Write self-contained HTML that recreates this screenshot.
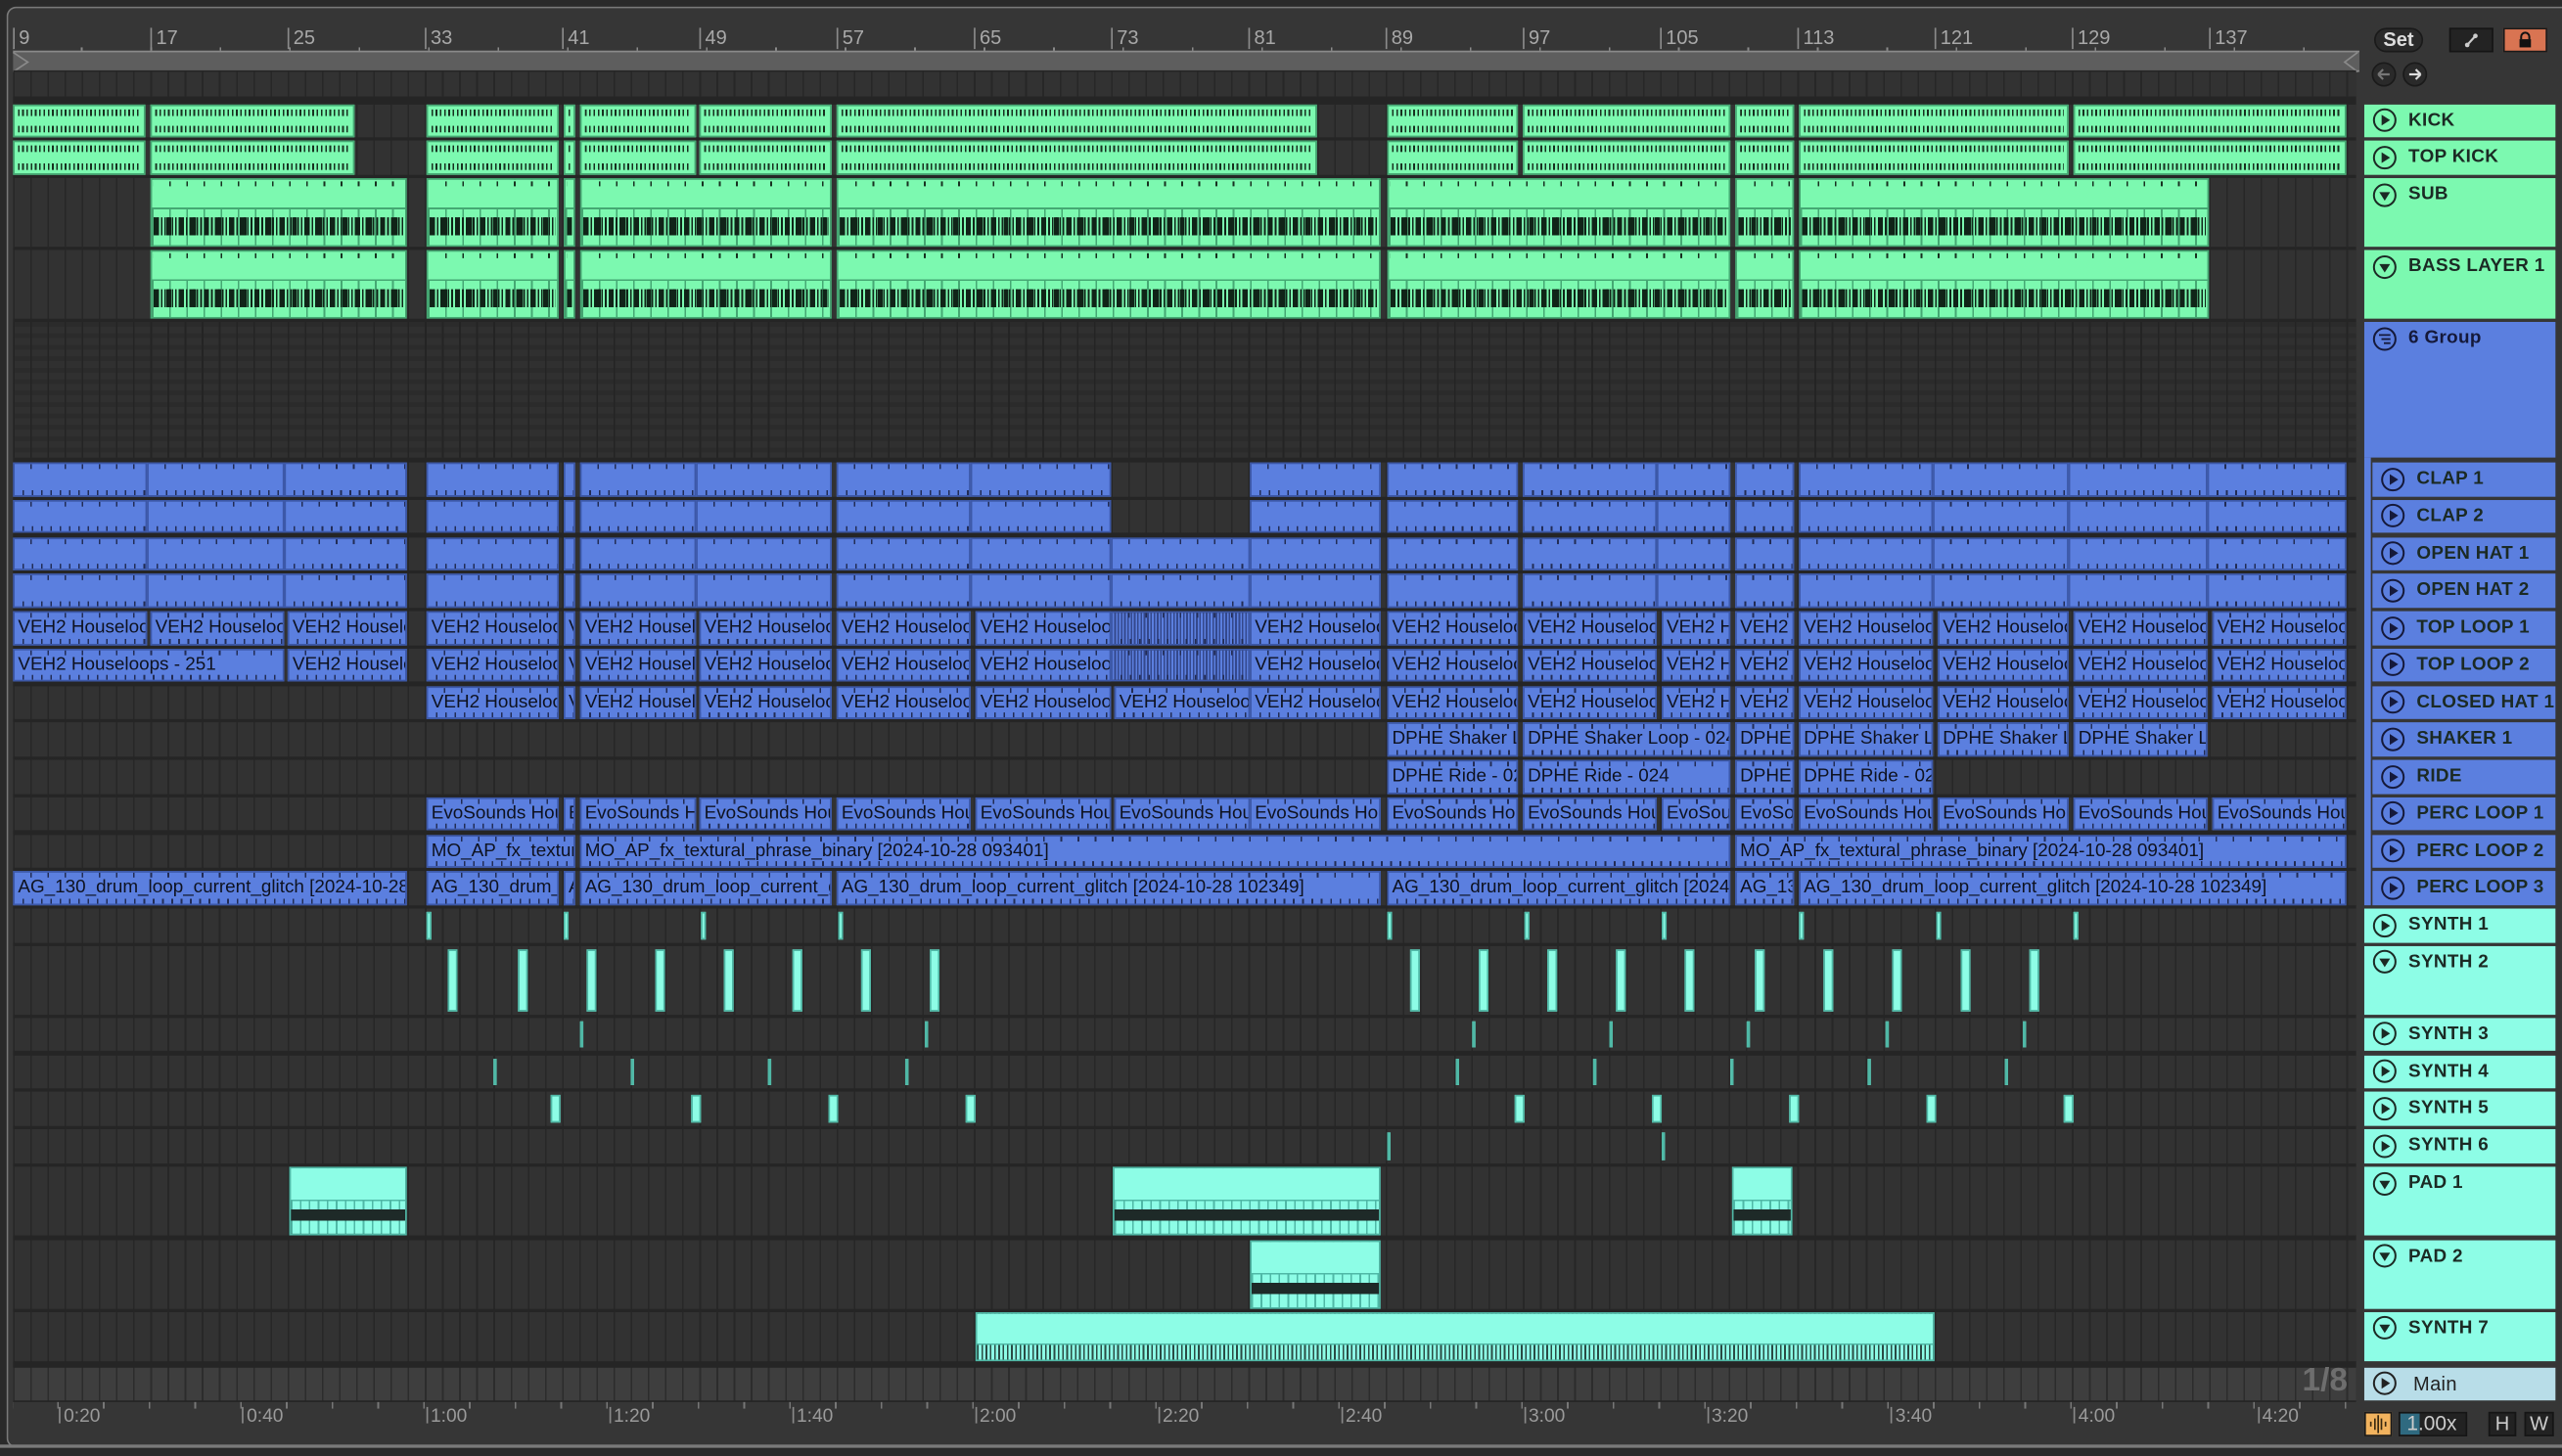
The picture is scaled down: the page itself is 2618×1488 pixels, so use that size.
<!DOCTYPE html>
<html><head><meta charset="utf-8"><style>
html,body{margin:0;padding:0;background:#2a2a2a;overflow:hidden}
body{width:2618px;height:1488px;position:relative}
#c{position:absolute;left:0;top:0;width:1568px;height:891px;transform-origin:0 0;transform:scale(1.66964,1.67003);font-family:"Liberation Sans",sans-serif}
.a{position:absolute}
#panel{left:4px;top:4px;width:1570px;height:880px;border:1.5px solid #7a7a7a;border-right:none;border-radius:6px 0 0 6px;background:#363636}
.row{position:absolute;left:7.5px;width:1434px;background:repeating-linear-gradient(90deg,#272727 0 1px,#323232 1px 10.5px)}
.g,.b,.cy{position:absolute;top:0;height:100%;box-sizing:border-box}
.g{background:#7cf9b0;border:1px solid #45a873}
.g.k:before,.g.k:after{content:"";position:absolute;left:2px;right:2px;height:4px;background:repeating-linear-gradient(90deg,#17301f 0 1px,transparent 1px 2.6px)}
.g.k:before{top:2px}.g.k:after{bottom:2px}
.g.s{background:linear-gradient(#7cf9b0 0 17px,#45a873 17px 18px,transparent 18px),repeating-linear-gradient(90deg,#45a873 0 1px,#7cf9b0 1px 10.5px)}
.g.s:before{content:"";position:absolute;left:1px;right:1px;top:1px;height:3px;background:repeating-linear-gradient(90deg,transparent 0 9.5px,#17301f 9.5px 10.5px)}
.g.s:after{content:"";position:absolute;left:1px;right:1px;top:23px;height:11px;background:repeating-linear-gradient(90deg,#102418 0 1px,transparent 1px 2.2px),repeating-linear-gradient(90deg,#102418 0 3px,transparent 3px 7.7px)}
.b{background:#5b7fdf;border:1px solid #3c58a8;font-size:11.3px;line-height:18.5px;color:#0e1220;padding-left:2px;white-space:nowrap;overflow:hidden}
.b:before{content:"";position:absolute;left:0;right:0;top:0;height:3px;background:repeating-linear-gradient(90deg,transparent 0 9.5px,#222c55 9.5px 10.5px)}
.b:after{content:"";position:absolute;left:0;right:0;bottom:0;height:3px;background:repeating-linear-gradient(90deg,transparent 0 4.7px,#222c55 4.7px 5.7px)}
.b.w{background:repeating-linear-gradient(90deg,#5b7fdf 0 1px,#34488c 1px 2px)}
.cy{background:#8dfde6;border:1px solid #4fb8a6}
.cy.p{background:linear-gradient(#8dfde6 0 19px,#4fb8a6 19px 20px,transparent 20px 25px,#1e2a28 25px 32px,transparent 32px),repeating-linear-gradient(90deg,#4fb8a6 0 1px,#8dfde6 1px 5.5px)}
.cy.q{background:linear-gradient(#8dfde6 0 18px,#4fb8a6 18px 19px,transparent 19px),repeating-linear-gradient(90deg,#2a4a44 0 1px,#8dfde6 1px 2.6px)}
.sl{position:absolute;top:2px;bottom:2px;background:#8dfde6;border:1px solid #4fb8a6;box-sizing:border-box}
.h{position:absolute;left:1447px;width:117px;box-sizing:border-box;font-weight:bold;font-size:11.3px;color:#1b2a24;letter-spacing:.2px}
.h svg{position:absolute;left:5px;top:2.5px}
.h span{position:absolute;left:27px;top:4px;white-space:nowrap}
.hg{background:#7cf9b0}.hb{background:#5b7fdf;left:1452px;width:112px}.hc{background:#8dfde6}
.hb span{left:27px}
.rl{position:absolute;top:17px;font-size:12px;color:#a8a8a8;padding-left:3px;border-left:1px solid #8a8a8a;height:13px;line-height:12px}
.tl{position:absolute;top:861px;font-size:11.5px;color:#9a9a9a;padding-left:2px;border-left:1px solid #888;height:10px;line-height:12px}
.tk{position:absolute;top:858px;width:1px;height:4px;background:#777}
.btn{position:absolute;box-sizing:border-box;background:#222;border:1px solid #151515;color:#ccc;font-size:12px;text-align:center}
</style></head><body><div id="c">
<div class="a" id="panel"></div>
<!-- ruler -->
<div class="a" style="left:7.5px;top:31px;width:1436px;height:11px;background:#5e5e5e;border-top:1.5px solid #8a8a8a;border-bottom:1.5px solid #8a8a8a"></div>
<svg class="a" style="left:7px;top:31px" width="1440" height="14"><path d="M1 1 L10 7 L1 13" fill="none" stroke="#8a8a8a" stroke-width="1"/><path d="M1436 1 L1428 7 L1436 13" fill="none" stroke="#8a8a8a" stroke-width="1"/></svg>
<div class="rl" style="left:7.5px">9</div><div class="rl" style="left:91.5px">17</div><div class="rl" style="left:175.5px">25</div><div class="rl" style="left:259.5px">33</div><div class="rl" style="left:343.5px">41</div><div class="rl" style="left:427.5px">49</div><div class="rl" style="left:511.5px">57</div><div class="rl" style="left:595.5px">65</div><div class="rl" style="left:679.5px">73</div><div class="rl" style="left:763.5px">81</div><div class="rl" style="left:847.5px">89</div><div class="rl" style="left:931.5px">97</div><div class="rl" style="left:1015.5px">105</div><div class="rl" style="left:1099.5px">113</div><div class="rl" style="left:1183.5px">121</div><div class="rl" style="left:1267.5px">129</div><div class="rl" style="left:1351.5px">137</div>
<div class="a" style="left:7.5px;top:29px;width:1434px;height:2px;background:repeating-linear-gradient(90deg,transparent 0 41.5px,#8a8a8a 41.5px 42.5px)"></div>
<!-- background area -->
<div class="a" style="left:7.5px;top:43px;width:1434px;height:815px;background:#252525"></div>
<div class="row" style="top:44px;height:15px"></div>
<div class="row" style="top:63.5px;height:20px"><div class="g k" style="left:0.5px;width:81px"></div><div class="g k" style="left:84.5px;width:125px"></div><div class="g k" style="left:253.5px;width:81px"></div><div class="g k" style="left:337.5px;width:7px"></div><div class="g k" style="left:347.5px;width:71px"></div><div class="g k" style="left:420.5px;width:81px"></div><div class="g k" style="left:504.5px;width:294px"></div><div class="g k" style="left:841.5px;width:80px"></div><div class="g k" style="left:924.5px;width:127px"></div><div class="g k" style="left:1054.5px;width:36px"></div><div class="g k" style="left:1093.5px;width:165px"></div><div class="g k" style="left:1261.5px;width:167px"></div></div>
<div class="row" style="top:86px;height:20.5px"><div class="g k" style="left:0.5px;width:81px"></div><div class="g k" style="left:84.5px;width:125px"></div><div class="g k" style="left:253.5px;width:81px"></div><div class="g k" style="left:337.5px;width:7px"></div><div class="g k" style="left:347.5px;width:71px"></div><div class="g k" style="left:420.5px;width:81px"></div><div class="g k" style="left:504.5px;width:294px"></div><div class="g k" style="left:841.5px;width:80px"></div><div class="g k" style="left:924.5px;width:127px"></div><div class="g k" style="left:1054.5px;width:36px"></div><div class="g k" style="left:1093.5px;width:165px"></div><div class="g k" style="left:1261.5px;width:167px"></div></div>
<div class="row" style="top:109px;height:42px"><div class="g s" style="left:84.5px;width:157px"></div><div class="g s" style="left:253.5px;width:81px"></div><div class="g s" style="left:337.5px;width:7px"></div><div class="g s" style="left:347.5px;width:154px"></div><div class="g s" style="left:504.5px;width:333px"></div><div class="g s" style="left:841.5px;width:210px"></div><div class="g s" style="left:1054.5px;width:36px"></div><div class="g s" style="left:1093.5px;width:251px"></div></div>
<div class="row" style="top:153px;height:42px"><div class="g s" style="left:84.5px;width:157px"></div><div class="g s" style="left:253.5px;width:81px"></div><div class="g s" style="left:337.5px;width:7px"></div><div class="g s" style="left:347.5px;width:154px"></div><div class="g s" style="left:504.5px;width:333px"></div><div class="g s" style="left:841.5px;width:210px"></div><div class="g s" style="left:1054.5px;width:36px"></div><div class="g s" style="left:1093.5px;width:251px"></div></div>
<div class="row" style="top:197px;height:83px;background:repeating-linear-gradient(90deg,#242424 0 1px,transparent 1px 10.5px),repeating-linear-gradient(#2b2b2b 0 3px,#303030 3px 7px)"></div>
<!-- CLAP1 -->
<div class="row" style="top:283px;height:20.5px"><div class="b" style="left:.5px;width:82px"></div><div class="b" style="left:82.5px;width:84px"></div><div class="b" style="left:166.5px;width:75px"></div><div class="b" style="left:253.5px;width:81px"></div><div class="b" style="left:337.5px;width:7px"></div><div class="b" style="left:347.5px;width:71px"></div><div class="b" style="left:418.5px;width:83px"></div><div class="b" style="left:504.5px;width:82px"></div><div class="b" style="left:586.5px;width:86px"></div><div class="b" style="left:757.5px;width:80px"></div><div class="b" style="left:841.5px;width:80px"></div><div class="b" style="left:924.5px;width:82px"></div><div class="b" style="left:1006.5px;width:45px"></div><div class="b" style="left:1054.5px;width:36px"></div><div class="b" style="left:1093.5px;width:82px"></div><div class="b" style="left:1175.5px;width:83px"></div><div class="b" style="left:1258.5px;width:85px"></div><div class="b" style="left:1343.5px;width:85px"></div></div>
<div class="row" style="top:305.75px;height:20.5px"><div class="b" style="left:.5px;width:82px"></div><div class="b" style="left:82.5px;width:84px"></div><div class="b" style="left:166.5px;width:75px"></div><div class="b" style="left:253.5px;width:81px"></div><div class="b" style="left:337.5px;width:7px"></div><div class="b" style="left:347.5px;width:71px"></div><div class="b" style="left:418.5px;width:83px"></div><div class="b" style="left:504.5px;width:82px"></div><div class="b" style="left:586.5px;width:86px"></div><div class="b" style="left:757.5px;width:80px"></div><div class="b" style="left:841.5px;width:80px"></div><div class="b" style="left:924.5px;width:82px"></div><div class="b" style="left:1006.5px;width:45px"></div><div class="b" style="left:1054.5px;width:36px"></div><div class="b" style="left:1093.5px;width:82px"></div><div class="b" style="left:1175.5px;width:83px"></div><div class="b" style="left:1258.5px;width:85px"></div><div class="b" style="left:1343.5px;width:85px"></div></div>
<div class="row" style="top:328.5px;height:20.5px"><div class="b" style="left:.5px;width:82px"></div><div class="b" style="left:82.5px;width:84px"></div><div class="b" style="left:166.5px;width:75px"></div><div class="b" style="left:253.5px;width:81px"></div><div class="b" style="left:337.5px;width:7px"></div><div class="b" style="left:347.5px;width:71px"></div><div class="b" style="left:418.5px;width:83px"></div><div class="b" style="left:504.5px;width:82px"></div><div class="b" style="left:586.5px;width:86px"></div><div class="b" style="left:672.5px;width:85px"></div><div class="b" style="left:757.5px;width:80px"></div><div class="b" style="left:841.5px;width:80px"></div><div class="b" style="left:924.5px;width:82px"></div><div class="b" style="left:1006.5px;width:45px"></div><div class="b" style="left:1054.5px;width:36px"></div><div class="b" style="left:1093.5px;width:82px"></div><div class="b" style="left:1175.5px;width:83px"></div><div class="b" style="left:1258.5px;width:85px"></div><div class="b" style="left:1343.5px;width:85px"></div></div>
<div class="row" style="top:351.25px;height:20.5px"><div class="b" style="left:.5px;width:82px"></div><div class="b" style="left:82.5px;width:84px"></div><div class="b" style="left:166.5px;width:75px"></div><div class="b" style="left:253.5px;width:81px"></div><div class="b" style="left:337.5px;width:7px"></div><div class="b" style="left:347.5px;width:71px"></div><div class="b" style="left:418.5px;width:83px"></div><div class="b" style="left:504.5px;width:82px"></div><div class="b" style="left:586.5px;width:86px"></div><div class="b" style="left:672.5px;width:85px"></div><div class="b" style="left:757.5px;width:80px"></div><div class="b" style="left:841.5px;width:80px"></div><div class="b" style="left:924.5px;width:82px"></div><div class="b" style="left:1006.5px;width:45px"></div><div class="b" style="left:1054.5px;width:36px"></div><div class="b" style="left:1093.5px;width:82px"></div><div class="b" style="left:1175.5px;width:83px"></div><div class="b" style="left:1258.5px;width:85px"></div><div class="b" style="left:1343.5px;width:85px"></div></div>
<!-- TOP LOOP 1 -->
<div class="row" style="top:374px;height:20.5px"><div class="b" style="left:.5px;width:82px">VEH2 Houseloops - 251</div><div class="b" style="left:84.5px;width:82px">VEH2 Houseloops - 251</div><div class="b" style="left:168.5px;width:73px">VEH2 Houseloops</div><div class="b" style="left:253.5px;width:81px">VEH2 Houseloops</div><div class="b" style="left:337.5px;width:7px">V</div><div class="b" style="left:347.5px;width:71px">VEH2 Houseloops</div><div class="b" style="left:420.5px;width:81px">VEH2 Houseloops</div><div class="b" style="left:504.5px;width:82px">VEH2 Houseloops</div><div class="b" style="left:589.5px;width:83px">VEH2 Houseloops</div><div class="b w" style="left:672.5px;width:85px"></div><div class="b" style="left:757.5px;width:80px">VEH2 Houseloops</div><div class="b" style="left:841.5px;width:80px">VEH2 Houseloops</div><div class="b" style="left:924.5px;width:82px">VEH2 Houseloops</div><div class="b" style="left:1009.5px;width:42px">VEH2 Houseloops</div><div class="b" style="left:1054.5px;width:36px">VEH2 Houseloops</div><div class="b" style="left:1093.5px;width:82px">VEH2 Houseloops</div><div class="b" style="left:1178.5px;width:80px">VEH2 Houseloops</div><div class="b" style="left:1261.5px;width:82px">VEH2 Houseloops</div><div class="b" style="left:1346.5px;width:82px">VEH2 Houseloops</div></div>
<div class="row" style="top:396.75px;height:20.5px"><div class="b" style="left:.5px;width:166px">VEH2 Houseloops - 251</div><div class="b" style="left:168.5px;width:73px">VEH2 Houseloops</div><div class="b" style="left:253.5px;width:81px">VEH2 Houseloops</div><div class="b" style="left:337.5px;width:7px">V</div><div class="b" style="left:347.5px;width:71px">VEH2 Houseloops</div><div class="b" style="left:420.5px;width:81px">VEH2 Houseloops</div><div class="b" style="left:504.5px;width:82px">VEH2 Houseloops</div><div class="b" style="left:589.5px;width:83px">VEH2 Houseloops</div><div class="b w" style="left:672.5px;width:85px"></div><div class="b" style="left:757.5px;width:80px">VEH2 Houseloops</div><div class="b" style="left:841.5px;width:80px">VEH2 Houseloops</div><div class="b" style="left:924.5px;width:82px">VEH2 Houseloops</div><div class="b" style="left:1009.5px;width:42px">VEH2 Houseloops</div><div class="b" style="left:1054.5px;width:36px">VEH2 Houseloops</div><div class="b" style="left:1093.5px;width:82px">VEH2 Houseloops</div><div class="b" style="left:1178.5px;width:80px">VEH2 Houseloops</div><div class="b" style="left:1261.5px;width:82px">VEH2 Houseloops</div><div class="b" style="left:1346.5px;width:82px">VEH2 Houseloops</div></div>
<div class="row" style="top:419.5px;height:20.5px"><div class="b" style="left:253.5px;width:81px">VEH2 Houseloops</div><div class="b" style="left:337.5px;width:7px">V</div><div class="b" style="left:347.5px;width:71px">VEH2 Houseloops</div><div class="b" style="left:420.5px;width:81px">VEH2 Houseloops</div><div class="b" style="left:504.5px;width:82px">VEH2 Houseloops</div><div class="b" style="left:589.5px;width:83px">VEH2 Houseloops</div><div class="b" style="left:674.5px;width:83px">VEH2 Houseloops</div><div class="b" style="left:757.5px;width:80px">VEH2 Houseloops</div><div class="b" style="left:841.5px;width:80px">VEH2 Houseloops</div><div class="b" style="left:924.5px;width:82px">VEH2 Houseloops</div><div class="b" style="left:1009.5px;width:42px">VEH2 Houseloops</div><div class="b" style="left:1054.5px;width:36px">VEH2 Houseloops</div><div class="b" style="left:1093.5px;width:82px">VEH2 Houseloops</div><div class="b" style="left:1178.5px;width:80px">VEH2 Houseloops</div><div class="b" style="left:1261.5px;width:82px">VEH2 Houseloops</div><div class="b" style="left:1346.5px;width:82px">VEH2 Houseloops</div></div>
<div class="row" style="top:442.25px;height:20.5px"><div class="b" style="left:841.5px;width:80px">DPHE Shaker Loop</div><div class="b" style="left:924.5px;width:127px">DPHE Shaker Loop - 024</div><div class="b" style="left:1054.5px;width:36px">DPHE Shaker</div><div class="b" style="left:1093.5px;width:82px">DPHE Shaker Loop</div><div class="b" style="left:1178.5px;width:80px">DPHE Shaker Loop</div><div class="b" style="left:1261.5px;width:82px">DPHE Shaker Loop</div></div>
<div class="row" style="top:465px;height:20.5px"><div class="b" style="left:841.5px;width:80px">DPHE Ride - 024</div><div class="b" style="left:924.5px;width:127px">DPHE Ride - 024</div><div class="b" style="left:1054.5px;width:36px">DPHE Ride</div><div class="b" style="left:1093.5px;width:82px">DPHE Ride - 024</div></div>
<div class="row" style="top:487.75px;height:20.5px"><div class="b" style="left:253.5px;width:81px">EvoSounds House</div><div class="b" style="left:337.5px;width:7px">E</div><div class="b" style="left:347.5px;width:71px">EvoSounds House</div><div class="b" style="left:420.5px;width:81px">EvoSounds House</div><div class="b" style="left:504.5px;width:82px">EvoSounds House</div><div class="b" style="left:589.5px;width:83px">EvoSounds House</div><div class="b" style="left:674.5px;width:83px">EvoSounds House</div><div class="b" style="left:757.5px;width:80px">EvoSounds House</div><div class="b" style="left:841.5px;width:80px">EvoSounds House</div><div class="b" style="left:924.5px;width:82px">EvoSounds House</div><div class="b" style="left:1009.5px;width:42px">EvoSounds House</div><div class="b" style="left:1054.5px;width:36px">EvoSounds</div><div class="b" style="left:1093.5px;width:82px">EvoSounds House</div><div class="b" style="left:1178.5px;width:80px">EvoSounds House</div><div class="b" style="left:1261.5px;width:82px">EvoSounds House</div><div class="b" style="left:1346.5px;width:82px">EvoSounds House</div></div>
<div class="row" style="top:510.5px;height:20.5px"><div class="b" style="left:253.5px;width:91px">MO_AP_fx_textural</div><div class="b" style="left:347.5px;width:704px">MO_AP_fx_textural_phrase_binary [2024-10-28 093401]</div><div class="b" style="left:1054.5px;width:374px">MO_AP_fx_textural_phrase_binary [2024-10-28 093401]</div></div>
<div class="row" style="top:533.25px;height:20.5px"><div class="b" style="left:.5px;width:241px">AG_130_drum_loop_current_glitch [2024-10-28 102349]</div><div class="b" style="left:253.5px;width:81px">AG_130_drum_loop</div><div class="b" style="left:337.5px;width:7px">A</div><div class="b" style="left:347.5px;width:154px">AG_130_drum_loop_current_glitch</div><div class="b" style="left:504.5px;width:333px">AG_130_drum_loop_current_glitch [2024-10-28 102349]</div><div class="b" style="left:841.5px;width:210px">AG_130_drum_loop_current_glitch [2024-10-28 102349]</div><div class="b" style="left:1054.5px;width:36px">AG_130</div><div class="b" style="left:1093.5px;width:335px">AG_130_drum_loop_current_glitch [2024-10-28 102349]</div></div>
<!-- synths -->
<div class="row" style="top:556px;height:20.5px"><div class="sl" style="left:253.5px;width:3px"></div><div class="sl" style="left:337.5px;width:3px"></div><div class="sl" style="left:421.5px;width:3px"></div><div class="sl" style="left:505.5px;width:3px"></div><div class="sl" style="left:841.5px;width:3px"></div><div class="sl" style="left:925.5px;width:3px"></div><div class="sl" style="left:1009.5px;width:3px"></div><div class="sl" style="left:1093.5px;width:3px"></div><div class="sl" style="left:1177.5px;width:3px"></div><div class="sl" style="left:1261.5px;width:3px"></div></div>
<div class="row" style="top:578.5px;height:42px"><div class="sl" style="left:266.5px;width:6px"></div><div class="sl" style="left:309.5px;width:6px"></div><div class="sl" style="left:351.5px;width:6px"></div><div class="sl" style="left:393.5px;width:6px"></div><div class="sl" style="left:435.5px;width:6px"></div><div class="sl" style="left:477.5px;width:6px"></div><div class="sl" style="left:519.5px;width:6px"></div><div class="sl" style="left:561.5px;width:6px"></div><div class="sl" style="left:855.5px;width:6px"></div><div class="sl" style="left:897.5px;width:6px"></div><div class="sl" style="left:939.5px;width:6px"></div><div class="sl" style="left:981.5px;width:6px"></div><div class="sl" style="left:1023.5px;width:6px"></div><div class="sl" style="left:1066.5px;width:6px"></div><div class="sl" style="left:1108.5px;width:6px"></div><div class="sl" style="left:1150.5px;width:6px"></div><div class="sl" style="left:1192.5px;width:6px"></div><div class="sl" style="left:1234.5px;width:6px"></div></div>
<div class="row" style="top:622.8px;height:20.5px"><div class="sl" style="left:347.5px;width:2px"></div><div class="sl" style="left:558.5px;width:2px"></div><div class="sl" style="left:893.5px;width:2px"></div><div class="sl" style="left:977.5px;width:2px"></div><div class="sl" style="left:1061.5px;width:2px"></div><div class="sl" style="left:1146.5px;width:2px"></div><div class="sl" style="left:1230.5px;width:2px"></div></div>
<div class="row" style="top:645.5px;height:20.5px"><div class="sl" style="left:294.5px;width:2px"></div><div class="sl" style="left:378.5px;width:2px"></div><div class="sl" style="left:462.5px;width:2px"></div><div class="sl" style="left:546.5px;width:2px"></div><div class="sl" style="left:883.5px;width:2px"></div><div class="sl" style="left:967.5px;width:2px"></div><div class="sl" style="left:1051.5px;width:2px"></div><div class="sl" style="left:1135.5px;width:2px"></div><div class="sl" style="left:1219.5px;width:2px"></div></div>
<div class="row" style="top:668.3px;height:20.5px"><div class="sl" style="left:329.5px;width:6px"></div><div class="sl" style="left:415.5px;width:6px"></div><div class="sl" style="left:499.5px;width:6px"></div><div class="sl" style="left:583.5px;width:6px"></div><div class="sl" style="left:919.5px;width:6px"></div><div class="sl" style="left:1003.5px;width:6px"></div><div class="sl" style="left:1087.5px;width:6px"></div><div class="sl" style="left:1171.5px;width:6px"></div><div class="sl" style="left:1255.5px;width:6px"></div></div>
<div class="row" style="top:691px;height:20.5px"><div class="sl" style="left:841.5px;width:2px"></div><div class="sl" style="left:1009.5px;width:2px"></div></div>
<div class="row" style="top:714px;height:42px"><div class="cy p" style="left:169.5px;width:72px"></div><div class="cy p" style="left:673.5px;width:164px"></div><div class="cy p" style="left:1052.5px;width:37px"></div></div>
<div class="row" style="top:758.5px;height:42px"><div class="cy p" style="left:757.5px;width:80px"></div></div>
<div class="row" style="top:802.5px;height:30px"><div class="cy q" style="left:589.5px;width:587px"></div></div>
<div class="row" style="top:836.5px;height:20.5px;background:repeating-linear-gradient(90deg,#2c2c2c 0 1px,#3e3e3e 1px 10.5px)"></div>
<div class="a" style="left:1409px;top:834px;font-size:20px;font-weight:bold;color:#6e6e6e">1/8</div>
<!-- time ruler -->
<div class="tl" style="left:36px">0:20</div><div class="tl" style="left:148px">0:40</div><div class="tl" style="left:260.5px">1:00</div><div class="tl" style="left:372.5px">1:20</div><div class="tl" style="left:484.5px">1:40</div><div class="tl" style="left:596.5px">2:00</div><div class="tl" style="left:708.5px">2:20</div><div class="tl" style="left:820.5px">2:40</div><div class="tl" style="left:932.5px">3:00</div><div class="tl" style="left:1044.5px">3:20</div><div class="tl" style="left:1157px">3:40</div><div class="tl" style="left:1269px">4:00</div><div class="tl" style="left:1381.5px">4:20</div>
<div class="a" style="left:8px;top:858px;width:1434px;height:4px;background:repeating-linear-gradient(90deg,transparent 0 27px,#777 27px 28px)"></div>
<!-- headers -->
<div class="h hg" style="top:63.5px;height:20px"><svg width="15" height="15" viewBox="0 0 15 15"><circle cx="7.5" cy="7.5" r="6.6" fill="none" stroke="#1b2a24" stroke-width="1.2"/><path d="M5.6 4.2v6.6l5.2-3.3z" fill="#1b2a24"/></svg><span>KICK</span></div>
<div class="h hg" style="top:86px;height:20.5px"><svg width="15" height="15" viewBox="0 0 15 15"><circle cx="7.5" cy="7.5" r="6.6" fill="none" stroke="#1b2a24" stroke-width="1.2"/><path d="M5.6 4.2v6.6l5.2-3.3z" fill="#1b2a24"/></svg><span>TOP KICK</span></div>
<div class="h hg" style="top:109px;height:42px"><svg width="15" height="15" viewBox="0 0 15 15"><circle cx="7.5" cy="7.5" r="6.6" fill="none" stroke="#1b2a24" stroke-width="1.2"/><path d="M4.2 5.6h6.6l-3.3 5.2z" fill="#1b2a24"/></svg><span>SUB</span></div>
<div class="h hg" style="top:153px;height:42px"><svg width="15" height="15" viewBox="0 0 15 15"><circle cx="7.5" cy="7.5" r="6.6" fill="none" stroke="#1b2a24" stroke-width="1.2"/><path d="M4.2 5.6h6.6l-3.3 5.2z" fill="#1b2a24"/></svg><span>BASS LAYER 1</span></div>
<div class="h" style="top:197px;height:83px;background:#5b7fdf;color:#15193a"><svg width="15" height="15" viewBox="0 0 15 15"><circle cx="7.5" cy="7.5" r="6.6" fill="none" stroke="#15193a" stroke-width="1.2"/><path d="M4 5h7M5.5 7.5h5.5M7 10h4" stroke="#15193a" stroke-width="1.1"/></svg><span style="font-weight:bold">6 Group</span></div>
<div class="a" style="left:1447px;top:280px;width:3.5px;height:274px;background:#5b7fdf"></div>
<div class="h hb" style="top:283px;height:20.5px"><svg width="15" height="15" viewBox="0 0 15 15"><circle cx="7.5" cy="7.5" r="6.6" fill="none" stroke="#15193a" stroke-width="1.2"/><path d="M5.6 4.2v6.6l5.2-3.3z" fill="#15193a"/></svg><span>CLAP 1</span></div>
<div class="h hb" style="top:305.75px;height:20.5px"><svg width="15" height="15" viewBox="0 0 15 15"><circle cx="7.5" cy="7.5" r="6.6" fill="none" stroke="#15193a" stroke-width="1.2"/><path d="M5.6 4.2v6.6l5.2-3.3z" fill="#15193a"/></svg><span>CLAP 2</span></div>
<div class="h hb" style="top:328.5px;height:20.5px"><svg width="15" height="15" viewBox="0 0 15 15"><circle cx="7.5" cy="7.5" r="6.6" fill="none" stroke="#15193a" stroke-width="1.2"/><path d="M5.6 4.2v6.6l5.2-3.3z" fill="#15193a"/></svg><span>OPEN HAT 1</span></div>
<div class="h hb" style="top:351.25px;height:20.5px"><svg width="15" height="15" viewBox="0 0 15 15"><circle cx="7.5" cy="7.5" r="6.6" fill="none" stroke="#15193a" stroke-width="1.2"/><path d="M5.6 4.2v6.6l5.2-3.3z" fill="#15193a"/></svg><span>OPEN HAT 2</span></div>
<div class="h hb" style="top:374px;height:20.5px"><svg width="15" height="15" viewBox="0 0 15 15"><circle cx="7.5" cy="7.5" r="6.6" fill="none" stroke="#15193a" stroke-width="1.2"/><path d="M5.6 4.2v6.6l5.2-3.3z" fill="#15193a"/></svg><span>TOP LOOP 1</span></div>
<div class="h hb" style="top:396.75px;height:20.5px"><svg width="15" height="15" viewBox="0 0 15 15"><circle cx="7.5" cy="7.5" r="6.6" fill="none" stroke="#15193a" stroke-width="1.2"/><path d="M5.6 4.2v6.6l5.2-3.3z" fill="#15193a"/></svg><span>TOP LOOP 2</span></div>
<div class="h hb" style="top:419.5px;height:20.5px"><svg width="15" height="15" viewBox="0 0 15 15"><circle cx="7.5" cy="7.5" r="6.6" fill="none" stroke="#15193a" stroke-width="1.2"/><path d="M5.6 4.2v6.6l5.2-3.3z" fill="#15193a"/></svg><span>CLOSED HAT 1</span></div>
<div class="h hb" style="top:442.25px;height:20.5px"><svg width="15" height="15" viewBox="0 0 15 15"><circle cx="7.5" cy="7.5" r="6.6" fill="none" stroke="#15193a" stroke-width="1.2"/><path d="M5.6 4.2v6.6l5.2-3.3z" fill="#15193a"/></svg><span>SHAKER 1</span></div>
<div class="h hb" style="top:465px;height:20.5px"><svg width="15" height="15" viewBox="0 0 15 15"><circle cx="7.5" cy="7.5" r="6.6" fill="none" stroke="#15193a" stroke-width="1.2"/><path d="M5.6 4.2v6.6l5.2-3.3z" fill="#15193a"/></svg><span>RIDE</span></div>
<div class="h hb" style="top:487.75px;height:20.5px"><svg width="15" height="15" viewBox="0 0 15 15"><circle cx="7.5" cy="7.5" r="6.6" fill="none" stroke="#15193a" stroke-width="1.2"/><path d="M5.6 4.2v6.6l5.2-3.3z" fill="#15193a"/></svg><span>PERC LOOP 1</span></div>
<div class="h hb" style="top:510.5px;height:20.5px"><svg width="15" height="15" viewBox="0 0 15 15"><circle cx="7.5" cy="7.5" r="6.6" fill="none" stroke="#15193a" stroke-width="1.2"/><path d="M5.6 4.2v6.6l5.2-3.3z" fill="#15193a"/></svg><span>PERC LOOP 2</span></div>
<div class="h hb" style="top:533.25px;height:20.5px"><svg width="15" height="15" viewBox="0 0 15 15"><circle cx="7.5" cy="7.5" r="6.6" fill="none" stroke="#15193a" stroke-width="1.2"/><path d="M5.6 4.2v6.6l5.2-3.3z" fill="#15193a"/></svg><span>PERC LOOP 3</span></div>
<div class="h hc" style="top:556px;height:20.5px"><svg width="15" height="15" viewBox="0 0 15 15"><circle cx="7.5" cy="7.5" r="6.6" fill="none" stroke="#1b2a24" stroke-width="1.2"/><path d="M5.6 4.2v6.6l5.2-3.3z" fill="#1b2a24"/></svg><span>SYNTH 1</span></div>
<div class="h hc" style="top:578.5px;height:42px"><svg width="15" height="15" viewBox="0 0 15 15"><circle cx="7.5" cy="7.5" r="6.6" fill="none" stroke="#1b2a24" stroke-width="1.2"/><path d="M4.2 5.6h6.6l-3.3 5.2z" fill="#1b2a24"/></svg><span>SYNTH 2</span></div>
<div class="h hc" style="top:622.8px;height:20.5px"><svg width="15" height="15" viewBox="0 0 15 15"><circle cx="7.5" cy="7.5" r="6.6" fill="none" stroke="#1b2a24" stroke-width="1.2"/><path d="M5.6 4.2v6.6l5.2-3.3z" fill="#1b2a24"/></svg><span>SYNTH 3</span></div>
<div class="h hc" style="top:645.5px;height:20.5px"><svg width="15" height="15" viewBox="0 0 15 15"><circle cx="7.5" cy="7.5" r="6.6" fill="none" stroke="#1b2a24" stroke-width="1.2"/><path d="M5.6 4.2v6.6l5.2-3.3z" fill="#1b2a24"/></svg><span>SYNTH 4</span></div>
<div class="h hc" style="top:668.3px;height:20.5px"><svg width="15" height="15" viewBox="0 0 15 15"><circle cx="7.5" cy="7.5" r="6.6" fill="none" stroke="#1b2a24" stroke-width="1.2"/><path d="M5.6 4.2v6.6l5.2-3.3z" fill="#1b2a24"/></svg><span>SYNTH 5</span></div>
<div class="h hc" style="top:691px;height:20.5px"><svg width="15" height="15" viewBox="0 0 15 15"><circle cx="7.5" cy="7.5" r="6.6" fill="none" stroke="#1b2a24" stroke-width="1.2"/><path d="M5.6 4.2v6.6l5.2-3.3z" fill="#1b2a24"/></svg><span>SYNTH 6</span></div>
<div class="h hc" style="top:714px;height:42px"><svg width="15" height="15" viewBox="0 0 15 15"><circle cx="7.5" cy="7.5" r="6.6" fill="none" stroke="#1b2a24" stroke-width="1.2"/><path d="M4.2 5.6h6.6l-3.3 5.2z" fill="#1b2a24"/></svg><span>PAD 1</span></div>
<div class="h hc" style="top:758.5px;height:42px"><svg width="15" height="15" viewBox="0 0 15 15"><circle cx="7.5" cy="7.5" r="6.6" fill="none" stroke="#1b2a24" stroke-width="1.2"/><path d="M4.2 5.6h6.6l-3.3 5.2z" fill="#1b2a24"/></svg><span>PAD 2</span></div>
<div class="h hc" style="top:802.5px;height:30px"><svg width="15" height="15" viewBox="0 0 15 15"><circle cx="7.5" cy="7.5" r="6.6" fill="none" stroke="#1b2a24" stroke-width="1.2"/><path d="M4.2 5.6h6.6l-3.3 5.2z" fill="#1b2a24"/></svg><span>SYNTH 7</span></div>
<div class="h" style="top:836.5px;height:20px;background:#b8dde8;font-weight:normal;color:#222"><svg width="15" height="15" viewBox="0 0 15 15"><circle cx="7.5" cy="7.5" r="6.6" fill="none" stroke="#222" stroke-width="1.2"/><path d="M5.6 4.2v6.6l5.2-3.3z" fill="#222"/></svg><span style="left:30px;top:3px;font-size:12px">Main</span></div>
<!-- top right controls -->
<div class="btn" style="left:1453px;top:17px;width:30px;height:15px;border-radius:8px;background:#2a2a2a;border-color:#1a1a1a;font-weight:bold;line-height:13px;color:#ddd">Set</div>
<div class="btn" style="left:1499px;top:17px;width:27px;height:15px;background:#232323"><svg width="25" height="13" viewBox="0 0 25 13"><path d="M10 9.5 L15 4" stroke="#ccc" stroke-width="1.3"/><circle cx="10" cy="9.5" r="1.4" fill="#ccc"/><circle cx="15" cy="4" r="1.4" fill="#ccc"/></svg></div>
<div class="btn" style="left:1532px;top:17px;width:27px;height:15px;background:#d97452;border-color:#1a1a1a"><svg width="25" height="13" viewBox="0 0 25 13"><path d="M10 6 v-1.5 a2.5 2.5 0 0 1 5 0 v1.5" fill="none" stroke="#111" stroke-width="1.2"/><rect x="9" y="6" width="7" height="5" fill="#111"/></svg></div>
<svg class="a" style="left:1451px;top:37px" width="36" height="17" viewBox="0 0 36 17"><circle cx="8" cy="8.5" r="7" fill="#2a2a2a" stroke="#1a1a1a"/><path d="M4.5 8.5h7M4.5 8.5l3-3M4.5 8.5l3 3" stroke="#777" stroke-width="1.3" fill="none"/><circle cx="27" cy="8.5" r="7" fill="#2a2a2a" stroke="#1a1a1a"/><path d="M23.5 8.5h7M30.5 8.5l-3-3M30.5 8.5l-3 3" stroke="#ddd" stroke-width="1.3" fill="none"/></svg>
<!-- bottom right -->
<div class="btn" style="left:1447px;top:863.5px;width:17px;height:15px;background:#f2b35e;border-color:#1a1a1a"><svg width="15" height="13" viewBox="0 0 15 13"><path d="M3 5v3M5.5 3v7M7.5 1v11M9.5 3v7M12 5v3" stroke="#3a2a10" stroke-width="1"/></svg></div>
<div class="btn" style="left:1468px;top:863.5px;width:42px;height:15px;line-height:13px;text-align:left;padding-left:4px;font-size:12.5px;background:linear-gradient(90deg,#2f6a80 0 12px,#222 12px)">1.00x</div>
<div class="btn" style="left:1523px;top:863.5px;width:17px;height:15px;line-height:13px">H</div>
<div class="btn" style="left:1545px;top:863.5px;width:18px;height:15px;line-height:13px">W</div>
<div class="a" style="left:0;top:884px;width:1568px;height:2px;background:#7a7a7a"></div>
</div></body></html>
